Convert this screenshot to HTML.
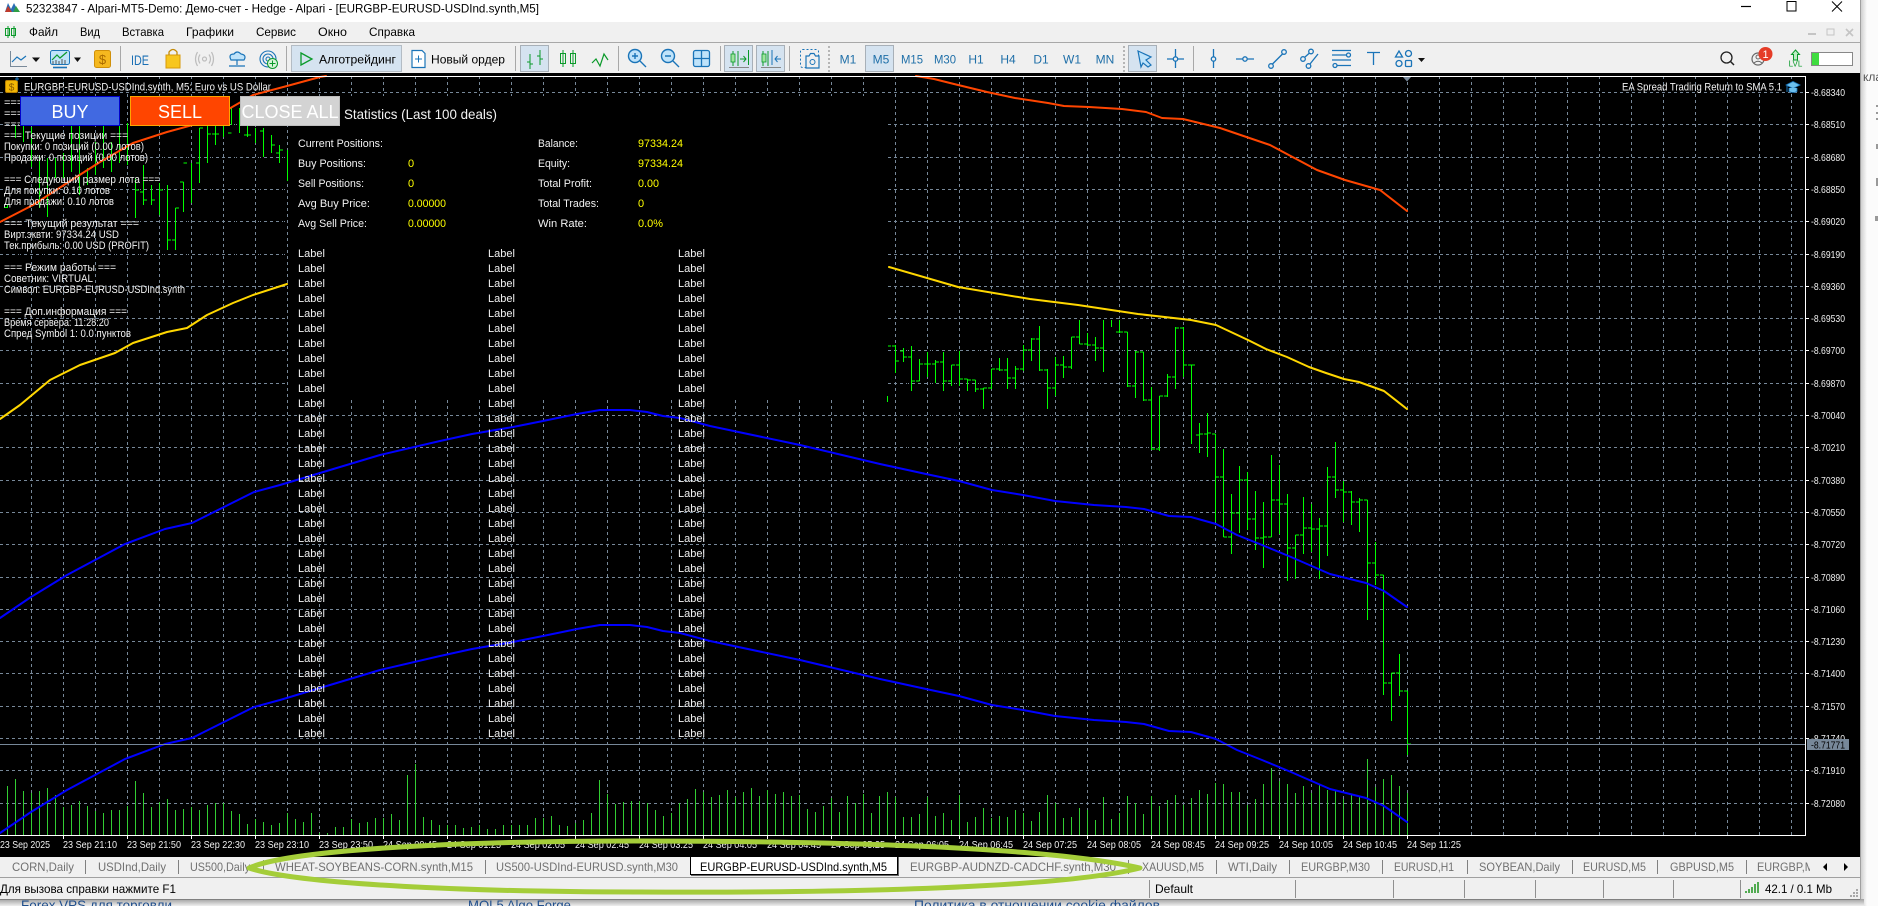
<!DOCTYPE html>
<html><head><meta charset="utf-8"><title>Alpari MT5</title>
<style>
html,body{margin:0;padding:0;width:1878px;height:906px;overflow:hidden;background:#fff}
svg{display:block;font-family:"Liberation Sans","DejaVu Sans",sans-serif}
.t{font-size:12px;fill:#000}
.w{font-size:11px;fill:#f2f2f2}
.y{font-size:11px;fill:#ffff00}
.c{font-size:11px;fill:#f2f2f2}
.p{font-size:10.5px;fill:#f0f0f0}
.d{font-size:10.5px;fill:#f0f0f0}
.tab{font-size:12px;fill:#707070}
.tf{font-size:12px;fill:#1f6fa8;text-anchor:middle}
.ic{fill:none;stroke:#1a74b8;stroke-width:1.3}
.cr{shape-rendering:crispEdges}
</style></head><body>
<svg width="1878" height="906" viewBox="0 0 1878 906" xmlns="http://www.w3.org/2000/svg">
<defs>
<pattern id="v" x="31" y="76" width="32" height="6" patternUnits="userSpaceOnUse"><rect width="1" height="3" fill="#778899"/></pattern>
<pattern id="gap" x="3" y="0" width="8" height="10" patternUnits="userSpaceOnUse"><rect width="1" height="10" fill="#000"/></pattern>
<linearGradient id="sh" x1="0" x2="1" y1="0" y2="0"><stop offset="0" stop-color="#c8c8c8"/><stop offset="1" stop-color="#fbfbfb"/></linearGradient>
<linearGradient id="sb" x1="0" x2="0" y1="0" y2="1"><stop offset="0" stop-color="#a0a0a0"/><stop offset="1" stop-color="#efefef"/></linearGradient>
</defs>
<!-- page behind window -->
<rect width="1878" height="906" fill="#fbfbfb"/>
<rect x="1860" y="0" width="7" height="906" fill="url(#sh)"/>
<rect x="0" y="899" width="1864" height="7" fill="url(#sb)"/>
<text x="1863" y="81" font-size="12" fill="#555">клад</text>
<g fill="#999"><rect x="1876" y="105" width="2" height="2"/><rect x="1876" y="112" width="2" height="2"/><rect x="1876" y="118" width="2" height="2"/><rect x="1876" y="144" width="2" height="5"/><rect x="1876" y="178" width="2" height="8"/><rect x="1875" y="216" width="3" height="5"/></g>
<text x="21" y="910" font-size="14" fill="#1f4e8c" textLength="151" lengthAdjust="spacingAndGlyphs">Forex VPS для торговли</text>
<text x="468" y="910" font-size="14" fill="#1f4e8c" textLength="103" lengthAdjust="spacingAndGlyphs">MQL5 Algo Forge</text>
<text x="914" y="910" font-size="14" fill="#1f4e8c" textLength="246" lengthAdjust="spacingAndGlyphs">Политика в отношении cookie файлов</text>

<!-- window chrome -->
<rect x="0" y="0" width="1860" height="22" fill="#fff"/>
<rect x="0" y="22" width="1860" height="51" fill="#f0f0f0"/>
<rect x="0" y="42" width="1860" height="1" fill="#a8a8a8" class="cr"/>
<!-- title -->
<path d="M5 12L8 3L11 9L14 3L17 9L20 12Z" fill="#2b6fb5"/><path d="M5 12L8 6L12 12Z" fill="#c0392b"/><path d="M13 12L16 6L20 12Z" fill="#2e9e45"/>
<text class="t" x="26" y="12.5" textLength="513" lengthAdjust="spacingAndGlyphs">52323847 - Alpari-MT5-Demo: Демо-счет - Hedge - Alpari - [EURGBP-EURUSD-USDInd.synth,M5]</text>
<g stroke="#000" stroke-width="1" fill="none"><path d="M1741 6.5H1751" stroke-width="1.2"/><rect x="1787" y="1.5" width="9" height="9.5"/><path d="M1832 1.5L1842 11.5M1842 1.5L1832 11.5"/></g>
<!-- menu -->
<path d="M8 26V38M14 26V38" stroke="#0a9a2a"/><rect x="5.5" y="28.5" width="4" height="7" fill="none" stroke="#0a9a2a"/><rect x="11.5" y="28.5" width="4" height="7" fill="none" stroke="#0a9a2a"/>
<text class="t" x="29" y="36" textLength="29" lengthAdjust="spacingAndGlyphs">Файл</text>
<text class="t" x="80" y="36" textLength="20" lengthAdjust="spacingAndGlyphs">Вид</text>
<text class="t" x="122" y="36" textLength="42" lengthAdjust="spacingAndGlyphs">Вставка</text>
<text class="t" x="186" y="36" textLength="48" lengthAdjust="spacingAndGlyphs">Графики</text>
<text class="t" x="256" y="36" textLength="40" lengthAdjust="spacingAndGlyphs">Сервис</text>
<text class="t" x="318" y="36" textLength="29" lengthAdjust="spacingAndGlyphs">Окно</text>
<text class="t" x="369" y="36" textLength="46" lengthAdjust="spacingAndGlyphs">Справка</text>
<g fill="#c4c4c4"><rect x="1808" y="33" width="8" height="2"/><rect x="1827" y="29" width="7" height="6" fill="none" stroke="#c4c4c4"/><path d="M1846 29l7 7m0-7l-7 7" stroke="#c4c4c4" stroke-width="1.6"/></g>

<!-- toolbar separators -->
<g fill="#a8a8a8" class="cr"><rect x="120" y="46" width="1" height="25"/><rect x="286" y="46" width="1" height="25"/><rect x="515" y="46" width="1" height="25"/><rect x="618" y="46" width="1" height="25"/><rect x="720" y="46" width="1" height="25"/><rect x="789" y="46" width="1" height="25"/><rect x="1193" y="46" width="1" height="25"/></g>
<g fill="#b5b5b5"><path d="M828 46h2v2h-2zM828 50h2v2h-2zM828 54h2v2h-2zM828 58h2v2h-2zM828 62h2v2h-2zM828 66h2v2h-2zM828 70h2v2h-2zM1123 46h2v2h-2zM1123 50h2v2h-2zM1123 54h2v2h-2zM1123 58h2v2h-2zM1123 62h2v2h-2zM1123 66h2v2h-2zM1123 70h2v2h-2z"/></g>
<!-- left icons -->
<path d="M10.5 51V66.5H27" fill="none" stroke="#7a8a99"/><path d="M12 62L17 57L21 60L26 56" fill="none" stroke="#1a74b8" stroke-width="1.2"/>
<path d="M32 57.5H40L36 62Z" fill="#111"/>
<rect x="50.5" y="50.5" width="19" height="14" rx="2" fill="#bfe3fa" stroke="#1a74b8"/><path d="M52 60L57 55L60 58L67 52" fill="none" stroke="#0a9a2a" stroke-width="1.2"/><path d="M53 64V61M56 64V60M59 64V61M62 64V59M65 64V60" stroke="#555" /><path d="M53 67.5H67" stroke="#1a74b8" stroke-width="1.6"/>
<path d="M74 57.5H81L77.5 62Z" fill="#111"/>
<rect x="94.5" y="50.5" width="16" height="17" rx="2" fill="#f5b81f" stroke="#d0900a"/><text x="102.5" y="64" font-size="13" text-anchor="middle" fill="#a86a00">$</text>
<text x="131" y="65" font-size="14" fill="#1a6fb5" textLength="18" lengthAdjust="spacingAndGlyphs">IDE</text>
<rect x="166" y="55" width="14" height="13" fill="#f7c61e" stroke="#d79a0a"/><path d="M169 55V52Q173 47 177 52V55" fill="none" stroke="#c48b08" stroke-width="1.3"/>
<g fill="none" stroke="#bdbdbd" stroke-width="1.2"><circle cx="204.5" cy="59" r="2"/><path d="M200 54.5Q197 59 200 63.5M209 54.5Q212 59 209 63.5M197.5 52Q193.5 59 197.5 66M211.5 52Q215.500 59 211.5 66"/></g>
<path d="M231 60Q228 54 234 54Q237 50 241 54Q247 55 244 60Z" fill="#bfe3fa" stroke="#1a74b8" stroke-width="1.2"/><path d="M237 60V65M229 66H245" stroke="#1a74b8" stroke-width="1.2" fill="none"/>
<g fill="none" stroke="#1a74b8" stroke-width="1.1"><circle cx="268" cy="59" r="8"/><circle cx="268" cy="59" r="5"/><circle cx="268" cy="59" r="2"/></g><circle cx="272.500" cy="63.500" r="5" fill="#d8f3d8" stroke="#0a9a2a"/><path d="M269.500 63.500H275.500M272.500 60.500V66.500" stroke="#0a9a2a"/>
<!-- algotrading -->
<rect x="291.500" y="45.500" width="110" height="26" fill="#d5e3f0" stroke="#b4bcc4"/>
<path d="M301 53L312 59L301 65Z" fill="none" stroke="#0a9a2a" stroke-width="1.3"/>
<text class="t" x="319" y="63.500" textLength="77" lengthAdjust="spacingAndGlyphs">Алготрейдинг</text>
<path d="M412 50.500H422L425 53.500V67.500H412Z" fill="#fff" stroke="#1a74b8" stroke-width="1.200"/><path d="M415 59H422M418.500 55.500V62.500" stroke="#1a74b8"/>
<text class="t" x="431" y="63.500" textLength="74" lengthAdjust="spacingAndGlyphs">Новый ордер</text>
<!-- chart type -->
<rect x="520.500" y="45.500" width="28" height="26" fill="#d5e3f0" stroke="#a8b0b8"/>
<path d="M530 54V69M527 62H530M530 64H533M540 50V65M537 56H540M540 59H543" stroke="#0a9a2a" fill="none"/>
<path d="M563 50V67M573 50V67" stroke="#0a9a2a"/><rect x="560.500" y="53.500" width="5" height="10" fill="none" stroke="#0a9a2a"/><rect x="570.500" y="53.500" width="5" height="10" fill="none" stroke="#0a9a2a"/>
<path d="M592 63L596 59L600 66L604 54L608 60" fill="none" stroke="#0a9a2a" stroke-width="1.2"/>
<!-- zoom -->
<g fill="none" stroke="#1a74b8" stroke-width="1.4"><circle cx="635" cy="56" r="6.500" fill="#bfe3fa"/><path d="M640 61L646 67M632 56H638M635 53V59"/><circle cx="668" cy="56" r="6.500" fill="#bfe3fa"/><path d="M673 61L679 67M665 56H671"/></g>
<rect x="693.500" y="50.500" width="16" height="16" rx="2" fill="#bfe3fa" stroke="#1a74b8" stroke-width="1.300"/><path d="M701.500 50.500V66.500M693.500 58.500H709.500" stroke="#1a74b8" stroke-width="1.300"/>
<rect x="724.500" y="45.500" width="28" height="26" fill="#d5e3f0" stroke="#a8b0b8"/><rect x="756.500" y="45.500" width="28" height="26" fill="#d5e3f0" stroke="#a8b0b8"/>
<path d="M733 51V66M738 51V66M729 67.500H748" stroke="#0a9a2a" fill="none"/><rect x="731" y="54" width="4" height="8" fill="#9fe39f" stroke="#0a9a2a" stroke-width=".8"/><path d="M740 59H746M743.500 56L746 59L743.500 62M748.500 50V65" stroke="#0a9a2a" fill="none"/><path d="M729 67.500H749" stroke="#888"/>
<path d="M763 51V66M768 51V66" stroke="#0a9a2a" fill="none"/><rect x="762" y="54" width="4" height="8" fill="#9fe39f" stroke="#0a9a2a" stroke-width=".8"/><path d="M772 50V65M781 59H775M777.500 56L775 59L777.500 62" stroke="#1a74b8" fill="none"/><path d="M761 67.500H781" stroke="#888"/>
<rect x="800.500" y="49.500" width="18" height="18" rx="2" fill="none" stroke="#1a74b8" stroke-dasharray="2 2"/><path d="M806 56H809L810.500 53.500H814L815.500 56H819V68H806Z" fill="#f0f0f0" stroke="#1a74b8" stroke-width="1.200"/><circle cx="812.500" cy="62" r="2.500" fill="none" stroke="#1a74b8"/>
<!-- timeframes -->
<rect x="865.500" y="45.500" width="28" height="26" fill="#d5e3f0" stroke="#a8b0b8"/>
<text class="tf" x="848" y="63.500">M1</text><text class="tf" x="881" y="63.500">M5</text><text class="tf" x="912" y="63.500" textLength="22" lengthAdjust="spacingAndGlyphs">M15</text><text class="tf" x="945" y="63.500" textLength="22" lengthAdjust="spacingAndGlyphs">M30</text><text class="tf" x="976" y="63.500">H1</text><text class="tf" x="1008" y="63.500">H4</text><text class="tf" x="1041" y="63.500">D1</text><text class="tf" x="1072" y="63.500">W1</text><text class="tf" x="1105" y="63.500">MN</text>
<!-- cursors & objects -->
<rect x="1128.500" y="45.500" width="28" height="26" fill="#d5e3f0" stroke="#a8b0b8"/>
<path d="M1138 51L1151 57L1146 60L1151 65L1148 67L1143 63L1141 67Z" fill="#bfe3fa" stroke="#1a74b8" stroke-width="1.200"/>
<g class="ic"><circle cx="1175.500" cy="59" r="2.200"/><path d="M1175.500 49V56.500M1175.500 61.500V68M1167 59H1173M1178 59H1184"/>
<circle cx="1213.500" cy="59" r="2.200"/><path d="M1213.500 49V56.500M1213.500 61.500V68"/>
<circle cx="1245" cy="59" r="2.200"/><path d="M1236 59H1242.500M1247.500 59H1254"/>
<circle cx="1271" cy="66" r="2.300"/><circle cx="1284" cy="52" r="2.300"/><path d="M1272.500 64L1282.500 54"/>
<circle cx="1303" cy="59" r="2.300"/><circle cx="1311" cy="51.500" r="2.300"/><circle cx="1308.500" cy="66" r="2.300"/><path d="M1305 57L1309.500 53M1310 64L1318 54"/>
<circle cx="1335" cy="65.500" r="2"/><circle cx="1348.500" cy="55" r="2"/><path d="M1332 50.500H1351M1332 55H1346.500M1332 60H1351M1337 65.500H1351"/>
<path d="M1367 52.500H1380M1373.500 52.500V65" />
<path d="M1395.500 57L1399 51L1402.500 57Z"/><circle cx="1408.500" cy="53.500" r="3"/><circle cx="1399" cy="63.500" r="3"/><rect x="1405.500" y="60.500" width="6" height="6" rx="1"/></g>
<path d="M1418 58H1425L1421.500 62Z" fill="#111"/>
<!-- right icons -->
<circle cx="1726.500" cy="57.500" r="5.500" fill="none" stroke="#222" stroke-width="1.300"/><path d="M1730.500 61.500L1734 65" stroke="#222" stroke-width="1.500"/>
<circle cx="1758" cy="59" r="6" fill="none" stroke="#666" stroke-width="1.200"/><circle cx="1758" cy="57" r="2" fill="none" stroke="#666"/><path d="M1754 63Q1758 59.500 1762 63" fill="none" stroke="#666"/>
<circle cx="1765.500" cy="54" r="7" fill="#e53c27"/><text x="1765.500" y="58" font-size="11" fill="#fff" text-anchor="middle">1</text>
<path d="M1795.500 50L1799.500 54.500H1797.500V60H1793.500V54.500H1791.500Z" fill="#bdeec6" stroke="#0a9a2a"/><text x="1795.500" y="66.500" font-size="8" fill="#0a9a2a" text-anchor="middle">LVL</text>
<rect x="1811.500" y="52.500" width="41" height="13" fill="#fff" stroke="#888"/><rect x="1812" y="53" width="7" height="12" fill="#3fdc3f"/>

<!-- chart -->
<rect x="0" y="73" width="1860" height="784" fill="#000"/>
<rect x="0" y="76" width="1805" height="759" fill="url(#v)" class="cr"/>
<path class="cr" fill="none" stroke="#778899" stroke-dasharray="3 3" d="M0 92.500H1805M0 124.500H1805M0 157.500H1805M0 189.500H1805M0 221.500H1805M0 254.500H1805M0 286.500H1805M0 318.500H1805M0 350.500H1805M0 383.500H1805M0 415.500H1805M0 447.500H1805M0 480.500H1805M0 512.500H1805M0 544.500H1805M0 577.500H1805M0 609.500H1805M0 641.500H1805M0 673.500H1805M0 706.500H1805M0 738.500H1805M0 770.500H1805M0 803.500H1805"/>
<!-- volumes -->
<path class="cr" stroke="#32cd32" fill="none" d="M7.500 835V786M15.500 835V779M23.500 835V791M31.500 835V793M39.500 835V791M47.500 835V788M55.500 835V795M63.500 835V807M71.500 835V805M79.500 835V801M87.500 835V806M95.500 835V811M103.500 835V813M111.500 835V810M119.500 835V810M127.500 835V806M135.500 835V781M143.500 835V793M151.500 835V807M159.500 835V802M167.500 835V799M175.500 835V810M183.500 835V809M191.500 835V807M199.500 835V810M207.500 835V805M215.500 835V803M223.500 835V803M231.500 835V811M239.500 835V814M247.500 835V824M255.500 835V819M263.500 835V822M271.500 835V825M279.500 835V823M287.500 835V813M295.500 835V819M303.500 835V822M311.500 835V813M319.500 835V833M327.500 835V833M335.500 835V827M343.500 835V827M351.500 835V819M359.500 835V823M367.500 835V822M375.500 835V818M383.500 835V818M391.500 835V814M399.500 835V820M407.500 835V775M415.500 835V764M423.500 835V817M431.500 835V820M439.500 835V825M447.500 835V825M455.500 835V825M463.500 835V828M471.500 835V827M479.500 835V825M487.500 835V829M495.500 835V829M503.500 835V825M511.500 835V825M519.500 835V825M527.500 835V825M535.500 835V818M543.500 835V818M551.500 835V816M559.500 835V825M567.500 835V826M575.500 835V823M583.500 835V820M591.500 835V813M599.500 835V780M607.500 835V794M615.500 835V804M623.500 835V802M631.500 835V801M639.500 835V801M647.500 835V803M655.500 835V810M663.500 835V816M671.500 835V813M679.500 835V803M687.500 835V799M695.500 835V789M703.500 835V792M711.500 835V797M719.500 835V795M727.500 835V790M735.500 835V797M743.500 835V792M751.500 835V788M759.500 835V796M767.500 835V790M775.500 835V794M783.500 835V792M791.500 835V796M799.500 835V795M807.500 835V809M815.500 835V812M823.500 835V806M831.500 835V798M839.500 835V812M847.500 835V796M855.500 835V803M863.500 835V794M871.500 835V813M879.500 835V796M887.500 835V792M895.500 835V797M903.500 835V817M911.500 835V817M919.500 835V814M927.500 835V797M935.500 835V816M943.500 835V813M951.500 835V820M959.500 835V795M967.500 835V822M975.500 835V817M983.500 835V808M991.500 835V818M999.500 835V816M1007.500 835V817M1015.500 835V810M1023.500 835V813M1031.500 835V821M1039.500 835V812M1047.500 835V795M1055.500 835V803M1063.500 835V818M1071.500 835V817M1079.500 835V808M1087.500 835V810M1095.500 835V820M1103.500 835V797M1111.500 835V819M1119.500 835V813M1127.500 835V796M1135.500 835V803M1143.500 835V814M1151.500 835V796M1159.500 835V806M1167.500 835V800M1175.500 835V795M1183.500 835V805M1191.500 835V798M1199.500 835V790M1207.500 835V794M1215.500 835V783M1223.500 835V784M1231.500 835V792M1239.500 835V792M1247.500 835V805M1255.500 835V799M1263.500 835V784M1271.500 835V768M1279.500 835V781M1287.500 835V784M1295.500 835V793M1303.500 835V786M1311.500 835V793M1319.500 835V785M1327.500 835V790M1335.500 835V791M1343.500 835V799M1351.500 835V794M1359.500 835V797M1367.500 835V759M1375.500 835V787M1383.500 835V779M1391.500 835V775M1399.500 835V786M1407.500 835V793"/>
<!-- OHLC -->
<path class="cr" stroke="#00ff00" fill="none" d="M3 207.500H7.500M7.500 205V208M15.500 125V138M23.500 125V142M31.500 127V167M39.500 155V208M47.500 158V217M55.500 158V178M63.500 153V178M71.500 125V172M79.500 125V195M87.500 168V185M95.500 142V175M103.500 125V168M111.500 142V172M119.500 125V163M127.500 123V165M135.500 178V218M143.500 165V205M151.500 185V205M159.500 183V215M167.500 185V250M175.500 208V250M183.500 182V212M191.500 163V203M199.500 128V183M207.500 125V163M215.500 125V145M223.500 117V137M231.500 108V125M239.500 108V133M247.500 125V137M255.500 128V143M263.500 128V157M271.500 135V153M279.500 145V163M287.500 150V181
M135.500 190H139M139 192H143.500M143.500 200H147M151.500 200H155M159.500 190H163M167.500 240H171M171 240H175.500M175.500 208H179M179 182H183.500M183.500 163H187M195 163H199.500M199.500 128H203M207.500 134H211M211 134H215.500M215.500 134H219M227 133H231.500M239.500 125H243M243 135H247.500M247.500 135H251M259 131H263.500M271.500 145H275M275 153H279.500M279.500 150H283
M887.500 396V402M895.500 345V373M903.500 348V362M911.500 346V391M919.500 359V381M927.500 352V377M935.500 360V383M943.500 352V391M951.500 365V386M959.500 351V386M967.500 379V391M975.500 380V392M983.500 388V409M991.500 369V389M999.500 358V371M1007.500 358V389M1015.500 366V389M1023.500 345V371M1031.500 338V361M1039.500 326V371M1047.500 369V409M1055.500 357V396M1063.500 356V378M1071.500 337V369M1079.500 320V344M1087.500 333V346M1095.500 337V361M1103.500 320V372M1111.500 320V327M1119.500 320V333M1127.500 332V387M1135.500 351V398M1143.500 352V401M1151.500 387V450M1159.500 396V451M1167.500 374V397M1175.500 327V389M1183.500 327V377M1191.500 365V444M1199.500 423V453M1207.500 413V457M1215.500 434V522M1223.500 449V537M1231.500 494V554M1239.500 466V533M1247.500 472V530M1255.500 491V550M1263.500 502V568M1271.500 455V537M1279.500 465V534M1287.500 494V581M1295.500 535V579M1303.500 497V554M1311.500 504V552M1319.500 518V579M1327.500 467V556M1335.500 442V498M1343.500 481V522M1351.500 491V525M1359.500 498V532M1367.500 500V620M1375.500 542V585M1383.500 575V695M1391.500 673V721M1399.500 654V696M1407.500 691V755
M888 346H895.500M895.500 361H899M899 351H903.500M903.500 357H907M907 357H911.500M911.500 381H915M915 381H919.500M919.500 364H923M923 364H927.500M927.500 364H931M931 364H935.500M935.500 362H939M939 362H943.500M943.500 381H947M947 381H951.500M951.500 365H955M955 365H959.500M959.500 379H963M963 379H967.500M967.500 380H971M971 380H975.500M975.500 389H979M979 389H983.500M983.500 388H987M987 388H991.500M991.500 369H995M995 369H999.500M999.500 370H1003M1003 370H1007.500M1007.500 378H1011M1011 378H1015.500M1015.500 369H1019M1019 369H1023.500M1023.500 350H1027M1027 350H1031.500M1031.500 339H1035M1035 339H1039.500M1039.500 370H1043M1043 370H1047.500M1047.500 388H1051M1051 388H1055.500M1055.500 365H1059M1059 365H1063.500M1063.500 367H1067M1067 367H1071.500M1071.500 337H1075M1075 337H1079.500M1079.500 344H1083M1083 344H1087.500M1087.500 345H1091M1091 345H1095.500M1095.500 348H1099M1099 348H1103.500M1115 332H1119.500M1119.500 332H1123M1123 332H1127.500M1127.500 386H1131M1131 386H1135.500M1135.500 352H1139M1139 352H1143.500M1143.500 400H1147M1147 400H1151.500M1151.500 449H1155M1155 449H1159.500M1159.500 396H1163M1163 396H1167.500M1167.500 377H1171M1171 377H1175.500M1175.500 328H1179M1179 328H1183.500M1183.500 365H1187M1187 365H1191.500M1191.500 365H1195M1195 435H1199.500M1199.500 434H1203M1203 434H1207.500M1207.500 433H1211M1211 434H1215.500M1215.500 477H1219M1219 477H1223.500M1223.500 537H1227M1227 537H1231.500M1231.500 513H1235M1235 513H1239.500M1239.500 480H1243M1243 480H1247.500M1247.500 519H1251M1251 519H1255.500M1255.500 538H1259M1259 538H1263.500M1263.500 537H1267M1267 537H1271.500M1271.500 500H1275M1275 500H1279.500M1279.500 504H1283M1283 504H1287.500M1287.500 548H1291M1291 548H1295.500M1295.500 535H1299M1299 535H1303.500M1303.500 528H1307M1307 528H1311.500M1311.500 529H1315M1315 529H1319.500M1319.500 526H1323M1323 526H1327.500M1327.500 477H1331M1331 477H1335.500M1335.500 490H1339M1339 490H1343.500M1343.500 492H1347M1347 492H1351.500M1351.500 502H1355M1355 502H1359.500M1359.500 500H1363M1363 500H1367.500M1367.500 563H1371M1371 563H1375.500M1375.500 575H1379M1379 575H1383.500M1383.500 683H1387M1387 683H1391.500M1391.500 673H1395M1395 673H1399.500M1399.500 691H1403M1403 691H1407.500M1407.500 744H1411"/>
<rect x="0" y="100" width="288" height="160" fill="url(#gap)" class="cr"/>
<rect x="888" y="320" width="524" height="440" fill="url(#gap)" class="cr"/>
<!-- MAs -->
<g fill="none" stroke-width="2" stroke-linejoin="round" stroke-linecap="round">
<polyline stroke="#ff4500" points="0,222 33,205 67,183 100,162 133,143 167,132 200,123 227,110 253,95 287,86 320,77 326,76"/>
<polyline stroke="#ff4500" points="916,76 934,79 954,84 987,92 1015,98 1048,103 1064,106 1089,107 1122,109 1146,112 1162,118 1183,119 1220,128 1270,145 1317,170 1345,180 1380,190 1407,211"/>
<polyline stroke="#ffd700" points="0,419 20,405 50,380 80,365 115,353 133,343 167,332 187,328 207,315 233,303 253,295 287,284"/>
<polyline stroke="#ffd700" points="889,267 958,287 1030,299 1078,305 1138,314 1191,320 1216,325 1248,340 1266,349 1287,357 1309,367 1326,373 1344,379 1359,382 1384,391 1407,409"/>
<g id="blue"><polyline stroke="#0000ff" points="0,618 31,597 67,575 125,544 165,529 192,523 254,492 280,485 380,455 440,441 472,434 513,427 543,421 577,414 600,410 630,410 647,412 663,416 680,418 710,426 800,445 880,464 926,474 959,481 992,490 1023,495 1055,501 1094,505 1126,507 1144,509 1169,516 1191,517 1216,524 1237,535 1262,545 1291,557 1330,574 1366,583 1384,591 1407,607"/>
<polyline stroke="#0000ff" transform="translate(0,215)" points="0,618 31,597 67,575 125,544 165,529 192,523 254,492 280,485 380,455 440,441 472,434 513,427 543,421 577,414 600,410 630,410 647,412 663,416 680,418 710,426 800,445 880,464 926,474 959,481 992,490 1023,495 1055,501 1094,505 1126,507 1144,509 1169,516 1191,517 1216,524 1237,535 1262,545 1291,557 1330,574 1366,583 1384,591 1407,607"/></g>
</g>
<!-- bid line -->
<rect x="0" y="744" width="1805" height="1" fill="#778899" class="cr"/>
<!-- axes -->
<path class="cr" stroke="#fff" fill="none" d="M0 76.500H1805.500V835.500H0"/>
<path class="cr" stroke="#fff" fill="none" d="M1805 92.500h4M1805 124.500h4M1805 157.500h4M1805 189.500h4M1805 221.500h4M1805 254.500h4M1805 286.500h4M1805 318.500h4M1805 350.500h4M1805 383.500h4M1805 415.500h4M1805 447.500h4M1805 480.500h4M1805 512.500h4M1805 544.500h4M1805 577.500h4M1805 609.500h4M1805 641.500h4M1805 673.500h4M1805 706.500h4M1805 738.500h4M1805 770.500h4M1805 803.500h4M63.500 836v3M127.500 836v3M191.500 836v3M255.500 836v3M319.500 836v3M383.500 836v3M447.500 836v3M511.500 836v3M575.500 836v3M639.500 836v3M703.500 836v3M767.500 836v3M831.500 836v3M895.500 836v3M959.500 836v3M1023.500 836v3M1087.500 836v3M1151.500 836v3M1215.500 836v3M1279.500 836v3M1343.500 836v3M1407.500 836v3"/>
<path d="M1403 77H1411L1407 81.500Z" fill="#778899"/>
<!-- price labels -->
<text class="p" x="1811" y="96" textLength="34" lengthAdjust="spacingAndGlyphs">-8.68340</text>
<text class="p" x="1811" y="128" textLength="34" lengthAdjust="spacingAndGlyphs">-8.68510</text>
<text class="p" x="1811" y="161" textLength="34" lengthAdjust="spacingAndGlyphs">-8.68680</text>
<text class="p" x="1811" y="193" textLength="34" lengthAdjust="spacingAndGlyphs">-8.68850</text>
<text class="p" x="1811" y="225" textLength="34" lengthAdjust="spacingAndGlyphs">-8.69020</text>
<text class="p" x="1811" y="258" textLength="34" lengthAdjust="spacingAndGlyphs">-8.69190</text>
<text class="p" x="1811" y="290" textLength="34" lengthAdjust="spacingAndGlyphs">-8.69360</text>
<text class="p" x="1811" y="322" textLength="34" lengthAdjust="spacingAndGlyphs">-8.69530</text>
<text class="p" x="1811" y="354" textLength="34" lengthAdjust="spacingAndGlyphs">-8.69700</text>
<text class="p" x="1811" y="387" textLength="34" lengthAdjust="spacingAndGlyphs">-8.69870</text>
<text class="p" x="1811" y="419" textLength="34" lengthAdjust="spacingAndGlyphs">-8.70040</text>
<text class="p" x="1811" y="451" textLength="34" lengthAdjust="spacingAndGlyphs">-8.70210</text>
<text class="p" x="1811" y="484" textLength="34" lengthAdjust="spacingAndGlyphs">-8.70380</text>
<text class="p" x="1811" y="516" textLength="34" lengthAdjust="spacingAndGlyphs">-8.70550</text>
<text class="p" x="1811" y="548" textLength="34" lengthAdjust="spacingAndGlyphs">-8.70720</text>
<text class="p" x="1811" y="581" textLength="34" lengthAdjust="spacingAndGlyphs">-8.70890</text>
<text class="p" x="1811" y="613" textLength="34" lengthAdjust="spacingAndGlyphs">-8.71060</text>
<text class="p" x="1811" y="645" textLength="34" lengthAdjust="spacingAndGlyphs">-8.71230</text>
<text class="p" x="1811" y="677" textLength="34" lengthAdjust="spacingAndGlyphs">-8.71400</text>
<text class="p" x="1811" y="710" textLength="34" lengthAdjust="spacingAndGlyphs">-8.71570</text>
<text class="p" x="1811" y="742" textLength="34" lengthAdjust="spacingAndGlyphs">-8.71740</text>
<text class="p" x="1811" y="774" textLength="34" lengthAdjust="spacingAndGlyphs">-8.71910</text>
<text class="p" x="1811" y="807" textLength="34" lengthAdjust="spacingAndGlyphs">-8.72080</text>
<rect x="1807" y="739" width="42" height="11" fill="#778899"/>
<text x="1811" y="748.500" font-size="10.500" fill="#000" textLength="34" lengthAdjust="spacingAndGlyphs">-8.71771</text>
<!-- date labels -->
<text class="d" x="0" y="848" textLength="50" lengthAdjust="spacingAndGlyphs">23 Sep 2025</text>
<text class="d" x="63" y="848" textLength="54" lengthAdjust="spacingAndGlyphs">23 Sep 21:10</text>
<text class="d" x="127" y="848" textLength="54" lengthAdjust="spacingAndGlyphs">23 Sep 21:50</text>
<text class="d" x="191" y="848" textLength="54" lengthAdjust="spacingAndGlyphs">23 Sep 22:30</text>
<text class="d" x="255" y="848" textLength="54" lengthAdjust="spacingAndGlyphs">23 Sep 23:10</text>
<text class="d" x="319" y="848" textLength="54" lengthAdjust="spacingAndGlyphs">23 Sep 23:50</text>
<text class="d" x="383" y="848" textLength="54" lengthAdjust="spacingAndGlyphs">24 Sep 00:45</text>
<text class="d" x="447" y="848" textLength="54" lengthAdjust="spacingAndGlyphs">24 Sep 01:25</text>
<text class="d" x="511" y="848" textLength="54" lengthAdjust="spacingAndGlyphs">24 Sep 02:05</text>
<text class="d" x="575" y="848" textLength="54" lengthAdjust="spacingAndGlyphs">24 Sep 02:45</text>
<text class="d" x="639" y="848" textLength="54" lengthAdjust="spacingAndGlyphs">24 Sep 03:25</text>
<text class="d" x="703" y="848" textLength="54" lengthAdjust="spacingAndGlyphs">24 Sep 04:05</text>
<text class="d" x="767" y="848" textLength="54" lengthAdjust="spacingAndGlyphs">24 Sep 04:45</text>
<text class="d" x="831" y="848" textLength="54" lengthAdjust="spacingAndGlyphs">24 Sep 05:25</text>
<text class="d" x="895" y="848" textLength="54" lengthAdjust="spacingAndGlyphs">24 Sep 06:05</text>
<text class="d" x="959" y="848" textLength="54" lengthAdjust="spacingAndGlyphs">24 Sep 06:45</text>
<text class="d" x="1023" y="848" textLength="54" lengthAdjust="spacingAndGlyphs">24 Sep 07:25</text>
<text class="d" x="1087" y="848" textLength="54" lengthAdjust="spacingAndGlyphs">24 Sep 08:05</text>
<text class="d" x="1151" y="848" textLength="54" lengthAdjust="spacingAndGlyphs">24 Sep 08:45</text>
<text class="d" x="1215" y="848" textLength="54" lengthAdjust="spacingAndGlyphs">24 Sep 09:25</text>
<text class="d" x="1279" y="848" textLength="54" lengthAdjust="spacingAndGlyphs">24 Sep 10:05</text>
<text class="d" x="1343" y="848" textLength="54" lengthAdjust="spacingAndGlyphs">24 Sep 10:45</text>
<text class="d" x="1407" y="848" textLength="54" lengthAdjust="spacingAndGlyphs">24 Sep 11:25</text>

<!-- chart captions -->
<rect x="5.500" y="80.500" width="12" height="12" rx="1.500" fill="#f2b705" stroke="#b97f00"/><text x="11.500" y="90.500" font-size="10" text-anchor="middle" fill="#8a5a00">$</text><path d="M15 79H19M17 77V81" stroke="#1a74b8"/>
<text x="24" y="90.500" font-size="11" fill="#f2f2f2" textLength="247" lengthAdjust="spacingAndGlyphs">EURGBP-EURUSD-USDInd.synth, M5:  Euro vs US Dollar</text>
<text x="1622" y="90.500" font-size="11" fill="#f2f2f2" textLength="160" lengthAdjust="spacingAndGlyphs">EA Spread Trading Return to SMA 5.1</text>
<path d="M1786 85L1793 81.500L1800 85L1793 88.500Z" fill="#6cc0ee" stroke="#1a74b8" stroke-width=".8"/><path d="M1789 88V91.500Q1793 93.500 1797 91.500V88" fill="#6cc0ee" stroke="#1a74b8" stroke-width=".8"/><path d="M1787 85.500V92" stroke="#1a74b8"/>

<!-- panel -->
<rect x="288" y="96" width="599" height="302" fill="#000"/>
<text x="344" y="119" font-size="14" fill="#f2f2f2" textLength="153" lengthAdjust="spacingAndGlyphs">Statistics (Last 100 deals)</text>
<text class="w" x="298" y="147" textLength="85" lengthAdjust="spacingAndGlyphs">Current Positions:</text>
<text class="w" x="298" y="167" textLength="68" lengthAdjust="spacingAndGlyphs">Buy Positions:</text>
<text class="w" x="298" y="187" textLength="66" lengthAdjust="spacingAndGlyphs">Sell Positions:</text>
<text class="w" x="298" y="207" textLength="72" lengthAdjust="spacingAndGlyphs">Avg Buy Price:</text>
<text class="w" x="298" y="227" textLength="69" lengthAdjust="spacingAndGlyphs">Avg Sell Price:</text>
<text class="y" x="408" y="167">0</text><text class="y" x="408" y="187">0</text>
<text class="y" x="408" y="207" textLength="38" lengthAdjust="spacingAndGlyphs">0.00000</text>
<text class="y" x="408" y="227" textLength="38" lengthAdjust="spacingAndGlyphs">0.00000</text>
<text class="w" x="538" y="147" textLength="40" lengthAdjust="spacingAndGlyphs">Balance:</text>
<text class="w" x="538" y="167" textLength="32" lengthAdjust="spacingAndGlyphs">Equity:</text>
<text class="w" x="538" y="187" textLength="54" lengthAdjust="spacingAndGlyphs">Total Profit:</text>
<text class="w" x="538" y="207" textLength="61" lengthAdjust="spacingAndGlyphs">Total Trades:</text>
<text class="w" x="538" y="227" textLength="49" lengthAdjust="spacingAndGlyphs">Win Rate:</text>
<text class="y" x="638" y="147" textLength="45" lengthAdjust="spacingAndGlyphs">97334.24</text>
<text class="y" x="638" y="167" textLength="45" lengthAdjust="spacingAndGlyphs">97334.24</text>
<text class="y" x="638" y="187" textLength="21" lengthAdjust="spacingAndGlyphs">0.00</text>
<text class="y" x="638" y="207">0</text>
<text class="y" x="638" y="227" textLength="25" lengthAdjust="spacingAndGlyphs">0.0%</text>
<!-- Label rows -->
<g style="font-size:11px;fill:#f2f2f2">
<text x="298" y="257">Label</text><text x="488" y="257">Label</text><text x="678" y="257">Label</text>
<text x="298" y="272">Label</text><text x="488" y="272">Label</text><text x="678" y="272">Label</text>
<text x="298" y="287">Label</text><text x="488" y="287">Label</text><text x="678" y="287">Label</text>
<text x="298" y="302">Label</text><text x="488" y="302">Label</text><text x="678" y="302">Label</text>
<text x="298" y="317">Label</text><text x="488" y="317">Label</text><text x="678" y="317">Label</text>
<text x="298" y="332">Label</text><text x="488" y="332">Label</text><text x="678" y="332">Label</text>
<text x="298" y="347">Label</text><text x="488" y="347">Label</text><text x="678" y="347">Label</text>
<text x="298" y="362">Label</text><text x="488" y="362">Label</text><text x="678" y="362">Label</text>
<text x="298" y="377">Label</text><text x="488" y="377">Label</text><text x="678" y="377">Label</text>
<text x="298" y="392">Label</text><text x="488" y="392">Label</text><text x="678" y="392">Label</text>
<text x="298" y="407">Label</text><text x="488" y="407">Label</text><text x="678" y="407">Label</text>
<text x="298" y="422">Label</text><text x="488" y="422">Label</text><text x="678" y="422">Label</text>
<text x="298" y="437">Label</text><text x="488" y="437">Label</text><text x="678" y="437">Label</text>
<text x="298" y="452">Label</text><text x="488" y="452">Label</text><text x="678" y="452">Label</text>
<text x="298" y="467">Label</text><text x="488" y="467">Label</text><text x="678" y="467">Label</text>
<text x="298" y="482">Label</text><text x="488" y="482">Label</text><text x="678" y="482">Label</text>
<text x="298" y="497">Label</text><text x="488" y="497">Label</text><text x="678" y="497">Label</text>
<text x="298" y="512">Label</text><text x="488" y="512">Label</text><text x="678" y="512">Label</text>
<text x="298" y="527">Label</text><text x="488" y="527">Label</text><text x="678" y="527">Label</text>
<text x="298" y="542">Label</text><text x="488" y="542">Label</text><text x="678" y="542">Label</text>
<text x="298" y="557">Label</text><text x="488" y="557">Label</text><text x="678" y="557">Label</text>
<text x="298" y="572">Label</text><text x="488" y="572">Label</text><text x="678" y="572">Label</text>
<text x="298" y="587">Label</text><text x="488" y="587">Label</text><text x="678" y="587">Label</text>
<text x="298" y="602">Label</text><text x="488" y="602">Label</text><text x="678" y="602">Label</text>
<text x="298" y="617">Label</text><text x="488" y="617">Label</text><text x="678" y="617">Label</text>
<text x="298" y="632">Label</text><text x="488" y="632">Label</text><text x="678" y="632">Label</text>
<text x="298" y="647">Label</text><text x="488" y="647">Label</text><text x="678" y="647">Label</text>
<text x="298" y="662">Label</text><text x="488" y="662">Label</text><text x="678" y="662">Label</text>
<text x="298" y="677">Label</text><text x="488" y="677">Label</text><text x="678" y="677">Label</text>
<text x="298" y="692">Label</text><text x="488" y="692">Label</text><text x="678" y="692">Label</text>
<text x="298" y="707">Label</text><text x="488" y="707">Label</text><text x="678" y="707">Label</text>
<text x="298" y="722">Label</text><text x="488" y="722">Label</text><text x="678" y="722">Label</text>
<text x="298" y="737">Label</text><text x="488" y="737">Label</text><text x="678" y="737">Label</text>
</g>
<!-- comment -->
<text class="c" x="4" y="106">===</text>
<text class="c" x="4" y="117">===</text>
<text class="c" x="4" y="128">===</text>
<text class="c" x="4" y="139" textLength="124" lengthAdjust="spacingAndGlyphs">=== Текущие позиции ===</text>
<text class="c" x="4" y="150" textLength="140" lengthAdjust="spacingAndGlyphs">Покупки: 0 позиций (0.00 лотов)</text>
<text class="c" x="4" y="161" textLength="144" lengthAdjust="spacingAndGlyphs">Продажи: 0 позиций (0.00 лотов)</text>
<text class="c" x="4" y="183" textLength="156" lengthAdjust="spacingAndGlyphs">=== Следующий размер лота ===</text>
<text class="c" x="4" y="194" textLength="106" lengthAdjust="spacingAndGlyphs">Для покупки: 0.10 лотов</text>
<text class="c" x="4" y="205" textLength="110" lengthAdjust="spacingAndGlyphs">Для продажи: 0.10 лотов</text>
<text class="c" x="4" y="227" textLength="135" lengthAdjust="spacingAndGlyphs">=== Текущий результат ===</text>
<text class="c" x="4" y="238" textLength="115" lengthAdjust="spacingAndGlyphs">Вирт.эквти: 97334.24 USD</text>
<text class="c" x="4" y="249" textLength="145" lengthAdjust="spacingAndGlyphs">Тек.прибыль: 0.00 USD (PROFIT)</text>
<text class="c" x="4" y="271" textLength="112" lengthAdjust="spacingAndGlyphs">=== Режим работы ===</text>
<text class="c" x="4" y="282" textLength="89" lengthAdjust="spacingAndGlyphs">Советник: VIRTUAL</text>
<text class="c" x="4" y="293" textLength="181" lengthAdjust="spacingAndGlyphs">Символ: EURGBP-EURUSD-USDInd.synth</text>
<text class="c" x="4" y="315" textLength="123" lengthAdjust="spacingAndGlyphs">=== Доп.информация ===</text>
<text class="c" x="4" y="326" textLength="105" lengthAdjust="spacingAndGlyphs">Время сервера: 11:28:20</text>
<text class="c" x="4" y="337" textLength="127" lengthAdjust="spacingAndGlyphs">Спред Symbol 1: 0.0 пунктов</text>
<!-- buttons -->
<rect x="20.500" y="96.500" width="99" height="29" fill="#4169e1" stroke="#0000cd"/>
<text x="70" y="118" font-size="18" fill="#fff" text-anchor="middle">BUY</text>
<rect x="130.500" y="96.500" width="99" height="29" fill="#ff4500" stroke="#ffa500"/>
<text x="180" y="118" font-size="18" fill="#fff" text-anchor="middle">SELL</text>
<svg x="240" y="96" width="100" height="30" viewBox="240 96 100 30"><rect x="240.500" y="96.500" width="99" height="29" fill="#d3d3d3" stroke="#bebebe"/>
<text x="290" y="118" font-size="18" fill="#fff" text-anchor="middle">CLOSE ALL</text></svg>

<!-- tab bar -->
<rect x="0" y="857" width="1860" height="20" fill="#f0f0f0"/>
<g fill="#808080" class="cr"><rect x="85" y="860" width="1" height="14"/><rect x="178" y="860" width="1" height="14"/><rect x="263" y="860" width="1" height="14"/><rect x="485" y="860" width="1" height="14"/><rect x="1128" y="860" width="1" height="14"/><rect x="1216" y="860" width="1" height="14"/><rect x="1289" y="860" width="1" height="14"/><rect x="1382" y="860" width="1" height="14"/><rect x="1467" y="860" width="1" height="14"/><rect x="1572" y="860" width="1" height="14"/><rect x="1657" y="860" width="1" height="14"/><rect x="1746" y="860" width="1" height="14"/></g>
<text class="tab" x="12" y="871" textLength="62" lengthAdjust="spacingAndGlyphs">CORN,Daily</text>
<text class="tab" x="98" y="871" textLength="68" lengthAdjust="spacingAndGlyphs">USDInd,Daily</text>
<text class="tab" x="190" y="871" textLength="60" lengthAdjust="spacingAndGlyphs">US500,Daily</text>
<text class="tab" x="275" y="871" textLength="198" lengthAdjust="spacingAndGlyphs">WHEAT-SOYBEANS-CORN.synth,M15</text>
<text class="tab" x="496" y="871" textLength="182" lengthAdjust="spacingAndGlyphs">US500-USDInd-EURUSD.synth,M30</text>
<rect x="690.500" y="856.500" width="207" height="18" fill="#fff" stroke="#000"/><path d="M691 875.500H898.500V857" fill="none" stroke="#666"/>
<text x="700" y="871" font-size="12" fill="#000" textLength="187" lengthAdjust="spacingAndGlyphs">EURGBP-EURUSD-USDInd.synth,M5</text>
<text class="tab" x="910" y="871" textLength="206" lengthAdjust="spacingAndGlyphs">EURGBP-AUDNZD-CADCHF.synth,M30</text>
<text class="tab" x="1142" y="871" textLength="62" lengthAdjust="spacingAndGlyphs">XAUUSD,M5</text>
<text class="tab" x="1228" y="871" textLength="49" lengthAdjust="spacingAndGlyphs">WTI,Daily</text>
<text class="tab" x="1301" y="871" textLength="69" lengthAdjust="spacingAndGlyphs">EURGBP,M30</text>
<text class="tab" x="1394" y="871" textLength="60" lengthAdjust="spacingAndGlyphs">EURUSD,H1</text>
<text class="tab" x="1479" y="871" textLength="81" lengthAdjust="spacingAndGlyphs">SOYBEAN,Daily</text>
<text class="tab" x="1583" y="871" textLength="63" lengthAdjust="spacingAndGlyphs">EURUSD,M5</text>
<text class="tab" x="1670" y="871" textLength="64" lengthAdjust="spacingAndGlyphs">GBPUSD,M5</text>
<svg x="1757" y="857" width="53" height="20" viewBox="1757 857 53 20"><text class="tab" x="1757" y="871" textLength="69" lengthAdjust="spacingAndGlyphs">EURGBP,M30</text></svg>
<path d="M1827 863V871L1823 867ZM1844 863V871L1848 867Z" fill="#000"/>
<rect x="0" y="877" width="1860" height="1" fill="#a0a0a0" class="cr"/>
<!-- status bar -->
<rect x="0" y="878" width="1860" height="21" fill="#f0f0f0"/>
<rect x="0" y="899" width="1860" height="1" fill="#808080" class="cr"/>
<rect x="1860" y="0" width="1" height="900" fill="#a0a0a0" class="cr"/>
<text class="t" x="0" y="893" textLength="176" lengthAdjust="spacingAndGlyphs">Для вызова справки нажмите F1</text>
<text class="t" x="1155" y="893" textLength="38" lengthAdjust="spacingAndGlyphs">Default</text>
<g fill="#909090" class="cr"><rect x="1149" y="880" width="1" height="18"/><rect x="1295" y="880" width="1" height="18"/><rect x="1393" y="880" width="1" height="18"/><rect x="1464" y="880" width="1" height="18"/><rect x="1535" y="880" width="1" height="18"/><rect x="1603" y="880" width="1" height="18"/><rect x="1673" y="880" width="1" height="18"/><rect x="1740" y="880" width="1" height="18"/></g>
<path d="M1746 893v-2M1749 893v-4M1752 893v-6M1755 893v-9M1758 893v-11" stroke="#2a9a2a" stroke-width="1.600"/>
<text class="t" x="1765" y="893" textLength="67" lengthAdjust="spacingAndGlyphs">42.1 / 0.1 Mb</text>
<path d="M1856 889h2v2h-2zM1853 892h2v2h-2zM1856 892h2v2h-2zM1850 895h2v2h-2zM1853 895h2v2h-2zM1856 895h2v2h-2z" fill="#a8a8a8"/>
<!-- green ellipse -->
<path d="M249 868C290 850 450 841 640 841C800 841 1040 845 1140 868C1060 888 850 893 640 892C480 892 300 885 249 868Z" fill="none" stroke="#a4cd39" stroke-width="5" stroke-linejoin="round"/>
</svg>
</body></html>
